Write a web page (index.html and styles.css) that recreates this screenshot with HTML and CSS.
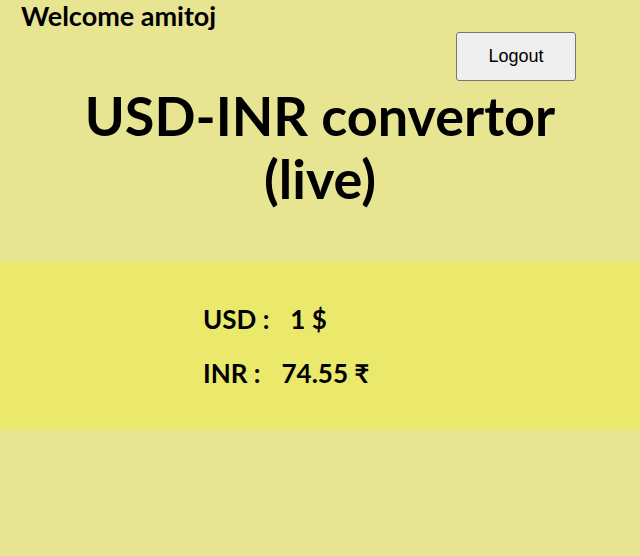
FILE: index.html
```html
<!DOCTYPE html>
<html>
<head>
<meta charset="utf-8">
<link rel="stylesheet" href="styles.css">
</head>
<body>
<div class="top">
  <h2 class="welcome">Welcome amitoj</h2>
  <div class="actions"><button class="logout">Logout</button></div>
</div>
<h1 class="title">USD-INR convertor (live)</h1>
<section class="band">
  <div class="row"><span class="label">USD :</span><span class="value">1 $</span></div>
  <div class="row"><span class="label">INR :</span><span class="value">74.55 ₹</span></div>
</section>
</body>
</html>
```
FILE: styles.css
```css
html, body {
  margin: 0;
  padding: 0;
  background: #e8e592;
  font-family: Lato, "Noto Sans", sans-serif;
  color: #000;
}
.top {
  padding: 0 64px 0 21px;
}
.welcome {
  margin: 0;
  font-size: 27px;
  font-weight: 700;
  line-height: 32px;
}
.actions {
  display: flex;
  justify-content: flex-end;
}
.logout {
  width: 120px;
  height: 49px;
  padding: 0;
  font-family: "Liberation Sans", Arial, sans-serif;
  font-size: 18px;
  background: #efefef;
  border: 1px solid #767676;
  border-radius: 3px;
  color: #000;
}
.title {
  margin: 3px 0 0;
  padding: 0 40px;
  text-align: center;
  font-size: 54px;
  font-weight: 700;
  line-height: 63px;
}
.band {
  margin-top: 52px;
  background: #eae96b;
  padding: 42px 0 41px 203px;
  display: flex;
  flex-direction: column;
  gap: 24px;
}
.row {
  font-size: 26px;
  font-weight: 700;
  line-height: 30px;
}
.label {
  margin-right: 21px;
}
```
